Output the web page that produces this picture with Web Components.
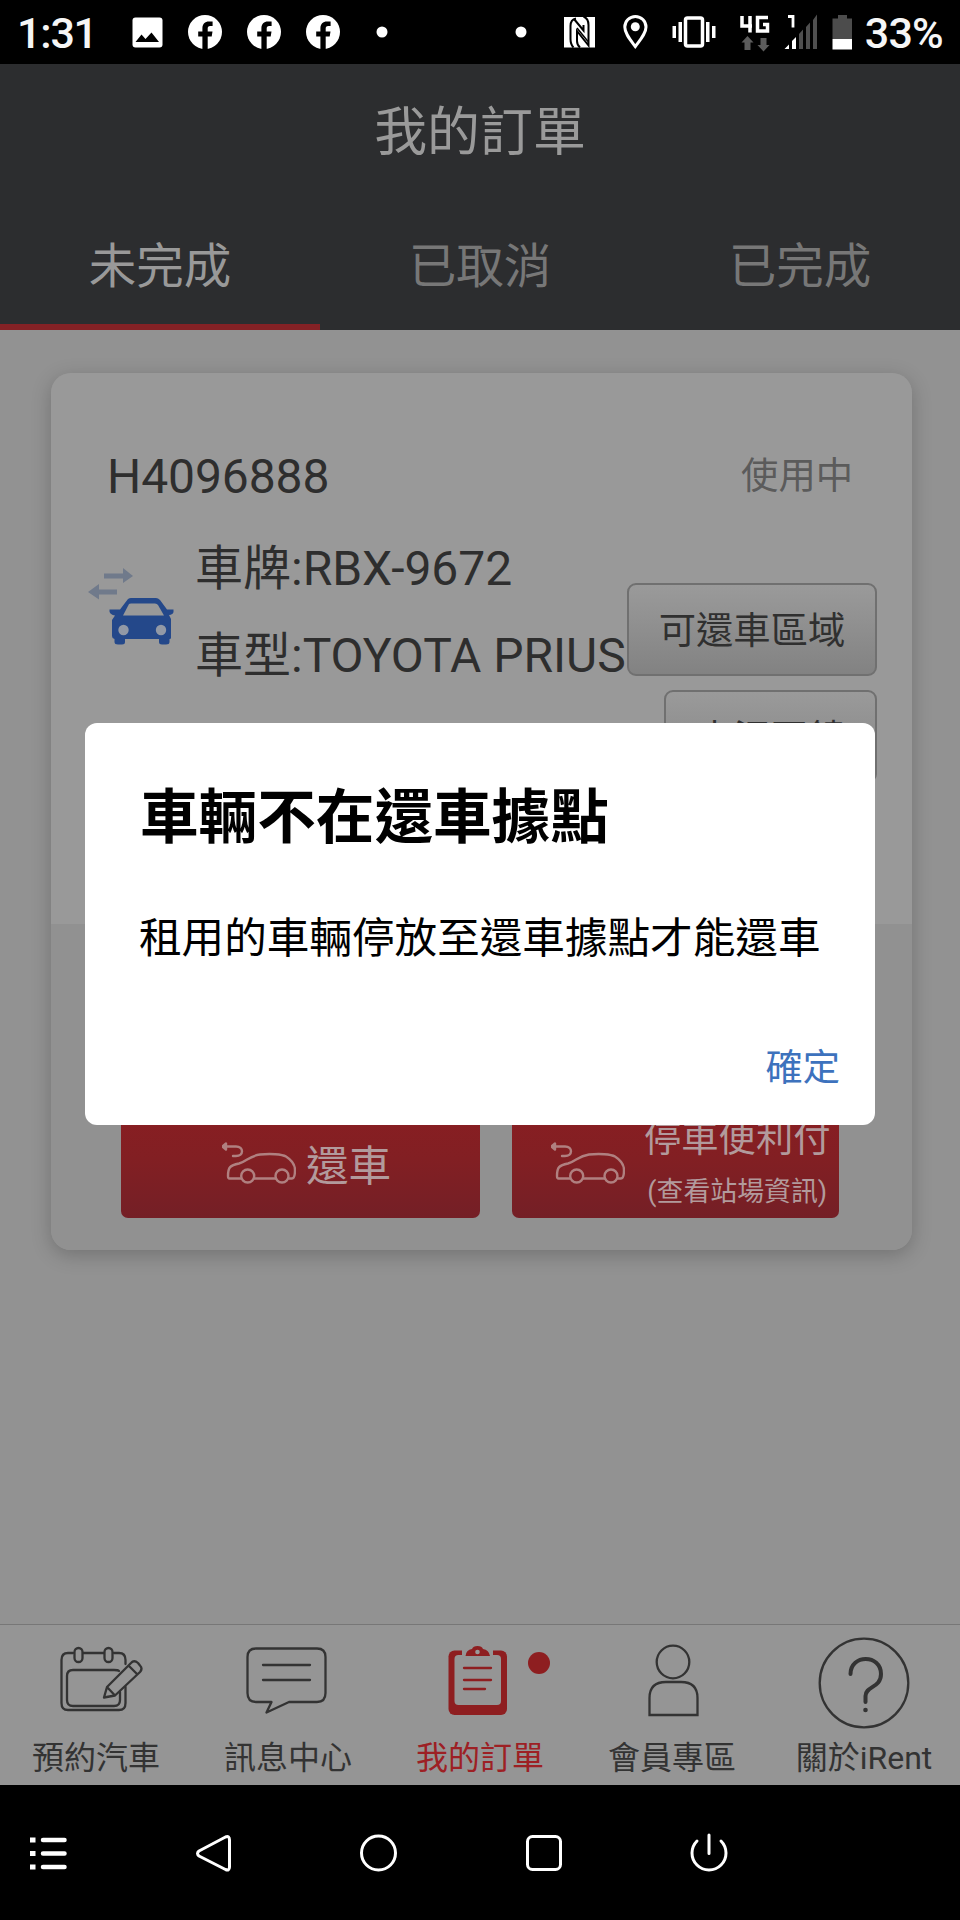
<!DOCTYPE html>
<html lang="zh-Hant">
<head>
<meta charset="utf-8">
<title>我的訂單</title>
<style>
html,body{margin:0;padding:0;background:#000}
body{font-family:Roboto,"Noto Sans CJK TC",sans-serif}
</style>
</head>
<body>
<rent-app></rent-app>
<script>
function define(name, html){
  const t=document.createElement('template'); t.innerHTML=html;
  customElements.define(name, class extends HTMLElement{
    constructor(){super();this.attachShadow({mode:'open'}).append(t.content.cloneNode(true));}
  });
}

const FB='<svg width="34" height="34" viewBox="0 0 34 34"><circle cx="17" cy="17" r="17" fill="#fff"/><path d="M14.400 34V21.400H10.200V16.600H14.400V13.500C14.400 9 17 6.600 20.900 6.600H24.600V11H22.200C20.300 11 19.700 12.100 19.700 13.300V16.600H24.500L23.700 21.400H19.700V34z" fill="#000"/></svg>';

define('status-bar',`<style>
:host{display:flex;height:64px;background:#000;color:#f6f6f6;align-items:center;box-sizing:border-box;padding:0 17px 0 17px;font-size:43px;font-weight:500;line-height:64px}
svg{display:block;flex:none}
.clock{width:115px;padding-top:1px;box-sizing:border-box;height:64px;flex:none;letter-spacing:-1.200px}
.notes{display:flex;align-items:center;gap:25px}
.sp{flex:1}
.sys{display:flex;align-items:center;height:64px}
.sys svg{margin-right:1px}
.pct{padding-top:1px;height:64px;box-sizing:border-box;letter-spacing:-.8px}
</style>
<div class="clock">1:31</div>
<div class="notes">
<svg width="31" height="31" viewBox="0 0 31 31"><rect x=".5" y=".5" width="30" height="30" rx="3" fill="#fff"/><path d="M3.500 25L9.500 17.500L13.500 22L19.500 15.500L27 25z" fill="#000"/></svg>
${FB}${FB}${FB}
<svg width="34" height="34" viewBox="0 0 34 34"><circle cx="17" cy="17" r="5.500" fill="#fff"/></svg>
</div>
<div class="sp"></div>
<div class="sys">
<svg width="350" height="64" viewBox="514 0 350 64">
<circle cx="521" cy="32" r="5.500" fill="#fff"/>
<rect x="564" y="17" width="31" height="30.500" fill="#fff"/>
<path d="M576 18.500Q570.500 19.500 570.500 26V39Q570.500 44.500 573.500 47.500M583.500 16.500Q588.500 18.500 588.500 25V45.500L577 31V41Q577 45 580 47.500M574 19L583.500 30.500V25" stroke="#000" stroke-width="2" fill="none"/>
<path d="M577 28L588 41.500" stroke="#000" stroke-width="1.500"/>
<path d="M635.300 46.500C630 39.500 624.800 33.500 624.800 27A10.600 10.600 0 0 1 646 27C646 33.500 640.500 39.500 635.300 46.500z" fill="none" stroke="#fff" stroke-width="3"/><circle cx="635.300" cy="26.800" r="4.500" fill="#fff"/>
<g fill="#fff"><rect x="672.500" y="26" width="3.500" height="12"/><rect x="678.500" y="22" width="3.500" height="20"/><rect x="706" y="22" width="3.500" height="20"/><rect x="712" y="26" width="3.500" height="12"/></g>
<rect x="685.500" y="18" width="17" height="28" rx="2" fill="none" stroke="#fff" stroke-width="3.500"/>
<path d="M742 16V26H752M750 16V32.500M768 17.500H757.500V31H767.500V24.500H763" fill="none" stroke="#fff" stroke-width="3.500"/>
<path d="M747.500 36L753.500 42.500H750.500V50H744.500V42.500H741.500zM763.500 51.500L769.500 45H766.500V38H760.500V45H757.500z" fill="#5c5c5c"/>
<path d="M788 16.500H793V27.500" fill="none" stroke="#fff" stroke-width="2.800"/>
<path d="M784.500 49L789 44.500V49zM792 49V41L796 37V49z" fill="#fff"/>
<path d="M799 49V34L803 29.500V49zM806 49V27L810 22.500V49zM813 49V20L817 14.500V49z" fill="#4f4f4f"/>
<path d="M832.500 39V18.500H838V15H847V18.500H852V39z" fill="#4c4c4c"/><rect x="832.500" y="39" width="19.500" height="10.500" fill="#fff"/>
</svg>
<div class="pct">33%</div></div>`);

define('app-header',`<style>
:host{display:flex;flex-direction:column;height:266px;background:#2c2d2f}
h1{margin:0;height:139px;line-height:139px;font-size:52.900px;font-weight:400;color:#9a9a9a;text-align:center}
.tabs{flex:1;display:grid;grid-template-columns:repeat(3,320px)}
.tabs ::slotted(*){display:block;box-sizing:border-box;height:127px;line-height:128px;text-align:center;font-size:47.500px;color:#777}
.tabs ::slotted([selected]){color:#999;border-bottom:6px solid #842125}
</style><h1><slot name="title"></slot></h1><div class="tabs"><slot></slot></div>`);

define('grey-button',`<style>
:host{display:block;box-sizing:border-box;height:93px;padding-top:1px;line-height:91px;border:2px solid #707070;border-radius:9px;background:linear-gradient(#9a9a9a,#929292 35%,#828282);color:#303030;font-size:37.300px;text-align:center}
</style><slot></slot>`);

const EV='<svg width="74" height="42" viewBox="0 0 74 42" fill="none" stroke="#b08080" stroke-width="2.400" stroke-linejoin="round" stroke-linecap="round"><path d="M4 4.500H14C22 4.500 22 14 14 14H11"/><path d="M0.500 4.500L4 1.500V7.500z" fill="#b08080"/><path d="M19 36.500H7.500Q6 36.500 6 34C6 25 8 23.500 17 21.500C25 19.500 27 14 38 12.500C48 11.500 60 12 64 14.500C71 19 73 23 73 28C73 34 72 36.500 70 36.500H67M54 36.500H32.500"/><circle cx="25.700" cy="34" r="6.500"/><circle cx="60" cy="34" r="6.500"/></svg>';

define('red-button',`<style>
:host{display:flex;box-sizing:border-box;height:118px;border-radius:7px;background:linear-gradient(#8a1e22,#821f23 50%,#741f26);color:#b29a9c;align-items:center}
.icon{padding-top:8px}svg{display:block}
.t{display:flex;flex-direction:column;text-align:center;padding-top:9px}
</style><div class="icon">${EV}</div><div class="t"><slot></slot></div>`);

define('order-card',`<style>
:host{display:flex;flex-direction:column;width:861px;height:877px;border-radius:20px;background:linear-gradient(#999 0 551px,#919191 551px);box-shadow:0 5px 20px rgba(0,0,0,.22);color:#2e2e2e;box-sizing:border-box;font-size:48px}
.head{display:flex;justify-content:space-between;padding:74px 59px 0 56px;height:133px;box-sizing:border-box;line-height:60px;letter-spacing:-.1px}
.head small{font-size:37.300px;line-height:59px;color:#5b5b5b;letter-spacing:0}
.info{display:flex;height:418px;box-sizing:border-box}
.car{width:144px;padding:62px 0 0 36px;box-sizing:border-box;flex:none}
.car svg{display:block}
.lines{width:432px;flex:none;padding-top:19px;white-space:nowrap}
.lines div{height:87px;line-height:87px}
.btns{display:flex;flex-direction:column;align-items:flex-end;gap:14px;padding-top:77px;width:250px;flex:none}
.a{width:250px}.b{width:213px;padding-top:2px}
.foot{display:flex;gap:32px;padding:176px 0 0 70px}
.r1{width:359px;padding-left:101px;gap:10px;font-size:42.600px}
.r1 span{margin-top:-2px}
.r2{width:327px;padding-left:39px;gap:19px}
.p{font-size:37.300px;line-height:48px;height:53px;margin-top:2px}.q{font-size:26.900px;line-height:48px;height:46px}
</style>
<div class="head"><span>H4096888</span><small>使用中</small></div>
<div class="info">
<div class="car"><svg width="90" height="80" viewBox="0 0 90 80">
<path d="M17 5.500H36V0L46 8L36 15V10.500H17zM30 21.500H12V16L1 24L12 31.500V26.500H30z" fill="#707a8b"/>
<path d="M41 31Q42.500 30 44 30H69Q71 30 73 32L80 41.500H86.500V44Q86 46.500 82 47L84 51V70Q84 71 82.500 71V74Q82.500 76.500 79 76.500H75Q72 76.500 72 74V71H38V74Q38 76.500 35 76.500H31Q27.500 76.500 27.500 74V71Q25 70.500 25 68V52L28 47.500Q23 46.500 22.500 43.500V41.500H33z" fill="#24488a"/>
<path d="M42 36Q42.500 35.500 44 35.500H68Q70 35.500 71 37L77 47.500H36z" fill="#999"/><circle cx="36.500" cy="62" r="5.200" fill="#9299a6"/><circle cx="74" cy="62" r="5.200" fill="#9299a6"/></svg></div>
<div class="lines"><div>車牌:RBX-9672</div><div>車型:TOYOTA PRIUS</div></div>
<div class="btns"><grey-button class="a">可還車區域</grey-button><grey-button class="b">車況回饋</grey-button></div>
</div>
<div class="foot"><red-button class="r1"><span>還車</span></red-button><red-button class="r2"><span class="p">停車便利付</span><span class="q">(查看站場資訊)</span></red-button></div>`);

define('nav-item',`<style>
:host{display:flex;flex-direction:column;align-items:center;color:#333;position:relative;font-size:32px}
.i{height:109px}.i ::slotted(svg){display:block;fill:none;stroke:#333;stroke-width:2.300px;stroke-linejoin:round;stroke-linecap:round}
.l{line-height:48px;white-space:nowrap}
:host([active]){color:#9d2024}
:host([active])::after{content:"";position:absolute;left:144px;top:27px;width:22px;height:22px;border-radius:50%;background:#8e1e20}
</style><div class="i"><slot name="icon"></slot></div><div class="l"><slot></slot></div>`);

define('bottom-nav',`<style>
:host{display:grid;grid-template-columns:repeat(5,192px);height:161px;box-sizing:border-box;border-top:1.500px solid #777;background:#959595}
</style>
<nav-item><svg slot="icon" width="100" height="108" viewBox="46 1625 100 108">
<path d="M73 1653H68Q61.500 1653 61.500 1660V1703Q61.500 1710 68 1710H119Q125.500 1710 125.500 1703V1687M83 1653H104M114 1653H119Q125.500 1653 125.500 1660V1664"/>
<rect x="74.500" y="1648" width="8" height="14" rx="4"/><rect x="104.500" y="1648" width="8" height="14" rx="4"/>
<path d="M119 1671Q118 1670 114 1670H73Q67 1670 67 1676V1700Q67 1706 73 1706H114Q120 1706 120 1700V1692"/>
<path d="M107 1687L131 1663Q134 1659.500 138 1663L140 1665.500Q143 1668.500 140 1672L115 1695.500L104 1697.500zM107 1687L115 1695.500M128.500 1665.500L137 1674"/></svg>預約汽車</nav-item>
<nav-item><svg slot="icon" width="100" height="108" viewBox="238 1625 100 108"><path d="M256 1648.500H317Q325.500 1648.500 325.500 1657V1693Q325.500 1702 317 1702H289L266.500 1712.500L271.500 1702H256Q247.500 1702 247.500 1693V1657Q247.500 1648.500 256 1648.500zM263 1665H310M263 1680H310"/></svg>訊息中心</nav-item>
<nav-item active><svg slot="icon" width="100" height="108" viewBox="430 1625 100 108">
<rect x="448.500" y="1650.500" width="58.500" height="64.500" rx="6" fill="#8e1e20" stroke="none"/><rect x="454.500" y="1655" width="46.500" height="50" rx="4" fill="#959595" stroke="none"/>
<path d="M462 1650V1654.500Q462 1658 466 1658H489Q493 1658 493 1654.500V1650z" fill="#959595" stroke="none"/><path d="M465.500 1656Q466 1650 472 1649Q473 1646 477.500 1646Q482 1646 483 1649Q489 1650 490 1656z" fill="#8e1e20" stroke="none"/><circle cx="477.500" cy="1652" r="2.300" fill="#999" stroke="none"/>
<path d="M464 1668H491M464 1680H491M464 1689H485" stroke="#8e1e20"/></svg>我的訂單</nav-item>
<nav-item><svg slot="icon" width="100" height="108" viewBox="622 1625 100 108"><circle cx="673" cy="1662" r="16.300"/><path d="M649.500 1715V1698Q649.500 1682 666 1682H681Q697.500 1682 697.500 1698V1715z" stroke-linejoin="miter"/></svg>會員專區</nav-item>
<nav-item><svg slot="icon" width="100" height="108" viewBox="814 1625 100 108"><circle cx="864" cy="1683" r="44.300"/><path d="M850.500 1674C850.500 1654 881 1654 881 1674C881 1688 865.500 1686 865.500 1696V1702" stroke-width="4"/><circle cx="865.500" cy="1710" r="2.300" fill="#333" stroke="none"/></svg>關於iRent</nav-item>`);

define('alert-dialog',`<style>
:host{display:flex;flex-direction:column;box-sizing:border-box;width:790px;height:402px;padding:62px 35px 0 55px;background:#fff;border-radius:12px;color:#000}
h2{margin:0;font-size:58.600px;line-height:66px;font-weight:700;white-space:nowrap}
p{margin:59px 0 0 -1px;font-size:42.600px;line-height:56px;white-space:nowrap}
.ok{align-self:flex-end;margin-top:77px;font-size:37.300px;line-height:50px;color:#3d72bd}
</style><h2><slot name="title"></slot></h2><p><slot></slot></p><div class="ok"><slot name="action"></slot></div>`);

define('system-nav',`<style>
:host{display:flex;height:135px;background:#000;padding-left:29px;gap:125px;align-items:center}
svg{display:block;fill:none;stroke:#fff;stroke-width:3;stroke-linejoin:round;stroke-linecap:round}
</style>
<svg width="40" height="40" viewBox="0 0 40 40"><path d="M14 7H35.500M14 20.500H35.500M14 34H35.500" stroke-width="4.500"/><path d="M1 7H6.500M1 20.500H6.500M1 34H6.500" stroke-width="5" stroke-linecap="butt"/></svg>
<svg width="40" height="40" viewBox="0 0 40 40"><path d="M31.500 4Q35.500 2.500 35.500 7V34Q35.500 38 31.500 36.500L5 23Q2 20.500 5 18z"/></svg>
<svg width="40" height="40" viewBox="0 0 40 40"><circle cx="19.500" cy="20" r="17"/></svg>
<svg width="40" height="40" viewBox="0 0 40 40"><rect x="3.500" y="3.500" width="33" height="33" rx="5"/></svg>
<svg width="40" height="40" viewBox="0 0 40 40"><path d="M20 2V20.500M8 8A17 17 0 1 0 32 8"/></svg>`);

define('rent-app',`<style>
:host{display:flex;flex-direction:column;width:960px;height:1920px;overflow:hidden;background:#929292}
.app{position:relative;flex:1;display:flex;flex-direction:column;min-height:0}
main{flex:1;padding:43px 0 0 51px;min-height:0}
.layer{position:absolute;inset:0;display:flex;align-items:center;justify-content:center;padding-bottom:1px}
</style>
<status-bar></status-bar>
<div class="app">
<app-header><span slot="title">我的訂單</span><div selected>未完成</div><div>已取消</div><div>已完成</div></app-header>
<main><order-card></order-card></main>
<bottom-nav></bottom-nav>
<div class="layer"><alert-dialog><span slot="title">車輛不在還車據點</span>租用的車輛停放至還車據點才能還車<span slot="action">確定</span></alert-dialog></div>
</div>
<system-nav></system-nav>`);
</script>
</body>
</html>
